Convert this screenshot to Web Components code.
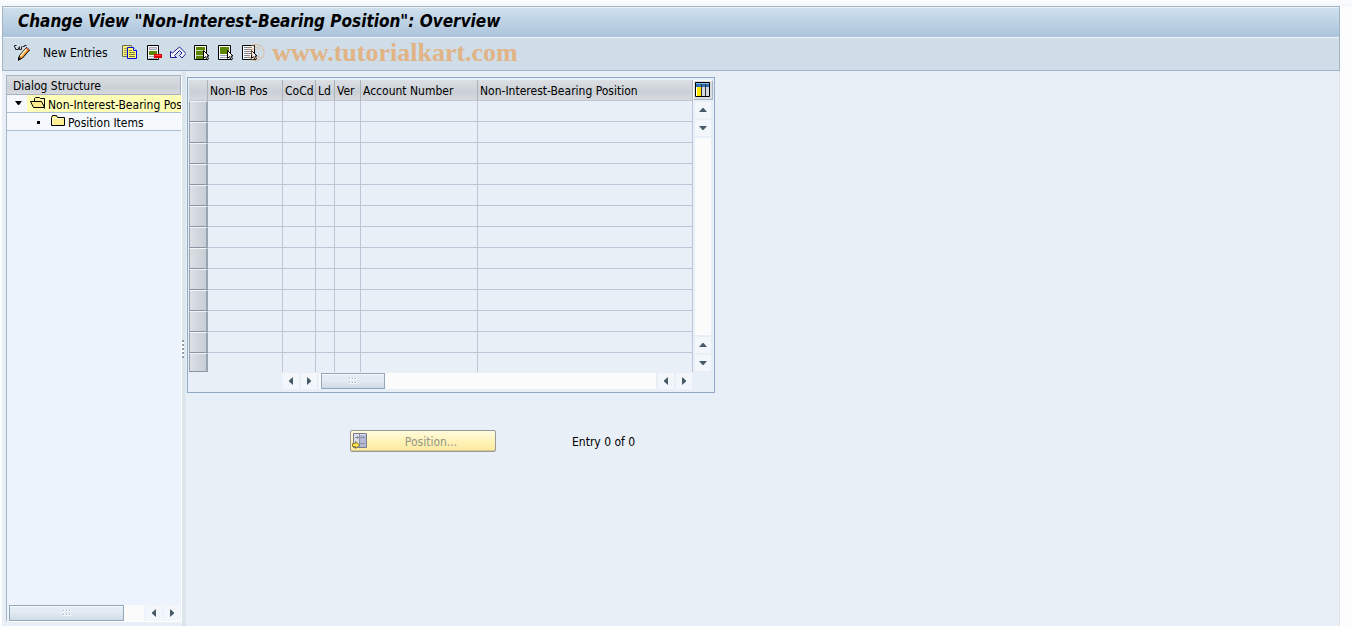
<!DOCTYPE html>
<html lang="en">
<head>
<meta charset="utf-8">
<title>Change View</title>
<style>
  :root {
    --text: #000;
    --line: #bcc6d6;
    --frame: #8eaac6;
    --surface: #e8eff6;
    --bar: #cfdde8;
    --head: linear-gradient(#dce0e5, #cbd0d6 60%, #d6dadf);
    --key: linear-gradient(#e6edf4, #e2eaf2 50%, #cfdbe6);
  }
  body {
    margin: 0;
    background: linear-gradient(#fcfdfe, #f4f7fa 6px, #fdfdfe 7px);
    color: var(--text);
    font: 12px/16px "DejaVu Sans Condensed", "DejaVu Sans", sans-serif;
  }
</style>
</head>
<body>
<view-window></view-window>

<script>
const ICONS = {
  edit: `
    <path fill="none" stroke="#222" d="M.5 2.500v-2h2m-1 2v2h3v-2m1-1v3h2v-3m1 0h2v-1h2"/>
    <path fill="#f59a2d" stroke="#000" d="M5.500 10.500l7-8 3 2.500-7 8-4 2z"/>
    <path fill="#fff3c4" d="M6 10.500l6-7 1.200 1-6 7z"/>
    <path fill="#d96552" d="M12 3.500l1-1 2 2-1 1z"/>
    <path fill="#000" d="M4 12l3 2-3 2z"/>`,
  copy: `
    <path fill="#f5f078" stroke="#6a6a55" d="M.500.500h9v11h-9z"/>
    <path stroke="#a2a05c" d="M2 3.500h4M2 5.500h4M2 7.500h4M2 9.500h4"/>
    <path fill="#ffff70" stroke="#0000e0" d="M5.500 2.500h6l3 3v8h-9z"/>
    <path fill="#fff" stroke="#0000e0" d="M11.500 2.500v3h3"/>
    <path stroke="#77773a" d="M7 5.500h3M7 7.500h6M7 9.500h6M7 11.500h6"/>`,
  remove: `
    <path fill="#fff" stroke="#000" d="M1.500.500h11v14h-11z"/>
    <path fill="#dedede" stroke="#a5a5b8" d="M3.500 2.500h7v2h-7z"/>
    <path fill="#5c8700" d="M3 6h8v4H3z"/>
    <path stroke="#a5a5b8" d="M3 11.500h5M3 13.500h8"/>
    <path fill="#e60000" d="M8 9h8v4H8z"/><path fill="#ff3b30" d="M9 10h6v1H9z"/>`,
  undo: `
    <path fill="#f7f8ff" stroke="#1c1c96" d="M.500 6.500v6h6l-2-2 5-5 2.500 2.500-2.500 2.500 2.500 2.500 4-4.500-6.500-6.500-7 6z"/>`,
  all: `
    <path fill="#fff" stroke="#000" d="M.500.500h12v14H.500z"/>
    <path fill="#5c8700" d="M2 2h9v3H2zM2 6h9v4H2zM2 11h8v3H2z"/>
    <path stroke="#cbd7ae" d="M2 5.500h9M2 10.500h8"/>
    <path fill="#fff" stroke="#000" d="M9.500 5.500v8l2-2 1.500 3.500 1.500-1-1.500-3h2z"/>`,
  block: `
    <path fill="#fff" stroke="#000" d="M.500.500h12v14H.500z"/>
    <path fill="#5c8700" d="M2 2h9v7H2z"/>
    <path stroke="#9aa0b8" d="M2 10.500h7M2 12.500h7"/>
    <path fill="#fff" stroke="#000" d="M9.500 5.500v8l2-2 1.500 3.500 1.500-1-1.500-3h2z"/>`,
  none: `
    <path fill="#fff" stroke="#000" d="M.500.500h12v14H.500z"/>
    <path stroke="#7b8296" d="M2 2.500h8M2 4.500h8M2 6.500h7M2 8.500h7M2 10.500h6M2 12.500h7"/>
    <path fill="#fff" stroke="#000" d="M9.500 5.500v8l2-2 1.500 3.500 1.500-1-1.500-3h2z"/>`,
  open: `
    <path fill="#fdf3a0" stroke="#000" d="M4.500 5.500v-3l1-1h4l1 1h4v10"/>
    <path fill="#fbeb8c" stroke="#000" d="M.500 5.500h11l3 6h-11z"/>`,
  folder: `
    <path fill="#fdee92" stroke="#000" d="M1.500 11.500v-8l1-2h4l1 2h7v8z"/>
    <path fill="none" stroke="#fffbd8" d="M2.500 10v-5.500h11"/>`,
  columns: `
    <path fill="#fff" stroke="#000" d="M.500.500h14v14H.500z"/>
    <path fill="#2c72b6" d="M1 1h13v4H1z"/><path fill="#86b8e2" d="M1 1h13v1H1z"/>
    <path fill="#ffe600" d="M2 5h4v9H2z"/>
    <path fill="#d5dade" d="M7 5h3v9H7zM11 5h3v9h-3z"/>
    <path stroke="#333" d="M6.500 2v12M10.500 2v12"/>`,
  position: `
    <path fill="#dcdfe9" stroke="#777c8c" d="M1.500.500h13v14h-13z"/>
    <path fill="#b5b8d2" d="M8 2h6v12H8z"/>
    <path stroke="#8b90a4" d="M3 4.500h4M5.500 3v3M8 4.500h5M8 10.500h5M7.500 1v13"/>
    <path fill="#ffe94d" stroke="#8a7a2c" d="M.500 10.500h3v-2l4 3.500-4 3.500v-2h-3z"/>`,
  left: `<path fill="#465a69" d="M10 4v8L6 8.500v-1z"/>`,
  right: `<path fill="#465a69" d="M6 4v8l4-3.500v-1z"/>`,
  up: `<path fill="#465a69" d="M4 10h8L8.500 6h-1z"/>`,
  down: `<path fill="#465a69" d="M4 6h8l-3.500 4h-1z"/>`
};

class UiIcon extends HTMLElement {
  constructor() {
    super();
    this.attachShadow({ mode: 'open' });
  }

  connectedCallback() {
    this.shadowRoot.innerHTML = `
      <style>
        :host { display: block; flex: none; width: 16px; height: 16px; }
        svg { display: block; }
      </style>
      <svg width="16" height="16" viewBox="0 0 16 16" aria-hidden="true">${ICONS[this.getAttribute('name')]}</svg>
    `;
  }
}

class ToolButton extends HTMLElement {
  constructor() {
    super();
    this.attachShadow({ mode: 'open' });
  }

  connectedCallback() {
    const icon = this.getAttribute('icon');
    const label = this.getAttribute('label');
    this.shadowRoot.innerHTML = `
      <style>
        :host { display: block; flex: none; }
        button {
          display: block;
          padding: 0;
          border: 0;
          background: none;
          color: inherit;
          font: inherit;
          cursor: pointer;
        }
      </style>
      <button type="button" ${label ? `aria-label="${label}"` : ''}>${icon ? `<ui-icon name="${icon}"></ui-icon>` : ''}<slot></slot></button>
    `;
  }
}

class TitleBar extends HTMLElement {
  constructor() {
    super();
    this.attachShadow({ mode: 'open' });
    this.shadowRoot.innerHTML = `
      <style>
        :host {
          display: block;
          padding: 2px 15px 5px;
          border-top: 1px solid #eaf2f8;
          border-bottom: 1px solid #edf3f8;
          background: linear-gradient(#cfe0ec, #abc3dc);
        }
        h1 {
          margin: 0;
          font: bold 17px/22px "DejaVu Sans Condensed", "DejaVu Sans", sans-serif;
          font-style: oblique 14deg;
          white-space: nowrap;
        }
      </style>
      <h1><slot></slot></h1>
    `;
  }
}

class ToolBar extends HTMLElement {
  constructor() {
    super();
    this.attachShadow({ mode: 'open' });
    this.shadowRoot.innerHTML = `
      <style>
        :host {
          display: flex;
          align-items: center;
          gap: 8px;
          position: relative;
          box-sizing: border-box;
          height: 32px;
          padding: 0 0 2px 11px;
          background: var(--bar);
        }
        .new { padding: 0 6px 0 5px; }
        .mark {
          position: absolute;
          left: 243px;
          top: 0;
          color: #e8a564;
          opacity: .75;
          font: bold 26px/30px "Liberation Serif", serif;
          white-space: nowrap;
          pointer-events: none;
        }
        .mark span { font-weight: normal; opacity: .7; }
      </style>
      <tool-button icon="edit" label="Display/Change"></tool-button>
      <tool-button class="new">New Entries</tool-button>
      <tool-button icon="copy" label="Copy As"></tool-button>
      <tool-button icon="remove" label="Delete"></tool-button>
      <tool-button icon="undo" label="Undo Change"></tool-button>
      <tool-button icon="all" label="Select All"></tool-button>
      <tool-button icon="block" label="Select Block"></tool-button>
      <tool-button icon="none" label="Deselect All"></tool-button>
      <div class="mark"><span>©</span> www.tutorialkart.com</div>
    `;
  }
}

// layout="double" repeats the pair of arrows at the start of the track
class ScrollBar extends HTMLElement {
  constructor() {
    super();
    this.attachShadow({ mode: 'open' });
  }

  connectedCallback() {
    const vertical = this.hasAttribute('vertical');
    const double = this.getAttribute('layout') === 'double';
    const names = vertical ? ['up', 'down'] : ['left', 'right'];
    const arrows = names.map(n => `<tool-button class="arrow" icon="${n}" label="Scroll ${n}"></tool-button>`).join('');
    const grip = '<i></i>'.repeat(6);
    this.shadowRoot.innerHTML = `
      <style>
        :host {
          display: flex;
          flex-direction: ${vertical ? 'column' : 'row'};
          gap: 2px;
        }
        .arrow { background: #f3f6fb; }
        .track {
          display: flex;
          flex: 1;
          min-width: 0;
          padding-left: var(--lead, 0);
          background: #fbfbfc;
        }
        .thumb {
          display: grid;
          grid-template-columns: repeat(3, 2px);
          gap: 2px 1px;
          place-content: center;
          box-sizing: border-box;
          width: var(--thumb, 64px);
          height: 16px;
          border: 1px solid #93a7ba;
          background: var(--key);
          box-shadow: inset 0 1px #f7fafc;
        }
        i { width: 2px; height: 2px; background: linear-gradient(135deg, #9eb0c0 50%, #fff 50%); }
      </style>
      ${double ? arrows : ''}
      <div class="track">${vertical ? '' : `<div class="thumb">${grip}</div>`}</div>
      ${arrows}
    `;
  }
}

class DialogTree extends HTMLElement {
  constructor() {
    super();
    this.attachShadow({ mode: 'open' });
    this.shadowRoot.innerHTML = `
      <style>
        :host {
          display: flex;
          flex-direction: column;
          box-sizing: border-box;
          width: 176px;
          border: 1px solid #fff;
          border-left-color: #a5b6c6;
          border-top-color: #a5b6c6;
          background: #ecf3fc;
        }
        h2 {
          margin: 0;
          padding: 2px 6px 0;
          border-bottom: 1px solid #a8b2bf;
          border-right: 1px solid #a8b2bf;
          background: var(--head);
          font: inherit;
        }
        ul { flex: 1; margin: 0; padding: 0; list-style: none; }
        li {
          display: flex;
          overflow: hidden;
          height: 17px;
          border-bottom: 1px solid #a9c0d2;
          background: #f5f9fe;
          white-space: nowrap;
        }
        .twist {
          box-sizing: border-box;
          flex: none;
          width: 20px;
          padding: 6px 0 0 8px;
        }
        .twist svg { display: block; }
        .node { display: flex; flex: 1; gap: 2px; padding: 1px 0 0 3px; }
        .node span { padding-top: 1px; }
        .selected { background: #ffffb8; }
        .child .twist { width: 40px; padding: 8px 0 0 30px; }
        scroll-bar { --thumb: 115px; padding: 0 1px 0 2px; }
      </style>
      <h2>Dialog Structure</h2>
      <ul role="tree">
        <li role="treeitem" aria-expanded="true" aria-selected="true">
          <div class="twist"><svg width="8" height="6" aria-hidden="true"><path d="M0 0h7L4 4H3z"/></svg></div>
          <div class="node selected"><ui-icon name="open"></ui-icon><span>Non-Interest-Bearing Position</span></div>
        </li>
        <li class="child" role="treeitem">
          <div class="twist"><svg width="3" height="3" aria-hidden="true"><path d="M0 0h3v3H0z"/></svg></div>
          <div class="node"><ui-icon name="folder"></ui-icon><span>Position Items</span></div>
        </li>
      </ul>
      <scroll-bar></scroll-bar>
    `;
  }
}

class EntryTable extends HTMLElement {
  constructor() {
    super();
    this.columns = [
      { name: 'Non-IB Pos', width: 75 },
      { name: 'CoCd', width: 33 },
      { name: 'Ld', width: 19 },
      { name: 'Ver', width: 26 },
      { name: 'Account Number', width: 117 },
      { name: 'Non-Interest-Bearing Position', width: 215 }
    ];
    this.rows = 13;
    this.attachShadow({ mode: 'open' });
    this.render();
  }

  render() {
    const cols = this.columns.map(c => `<col style="width: ${c.width}px">`).join('');
    const heads = this.columns.map(c => `<th scope="col">${c.name}</th>`).join('');
    const row = `<tr><td class="pick"></td>${'<td></td>'.repeat(this.columns.length)}</tr>`;
    this.shadowRoot.innerHTML = `
      <style>
        :host {
          display: inline-grid;
          grid-template-columns: auto 20px;
          row-gap: 1px;
          padding: 2px 1px 3px 1px;
          border: 1px solid var(--frame);
        }
        table {
          width: 504px;
          border-spacing: 0;
          table-layout: fixed;
        }
        .sel { width: 19px; }
        th, td {
          box-sizing: border-box;
          padding: 0;
          border-right: 1px solid var(--line);
          border-bottom: 1px solid var(--line);
        }
        th {
          height: 21px;
          padding: 2px 0 0 2px;
          border-right-color: #a9b1bb;
          background: var(--head);
          font-weight: normal;
          text-align: left;
          white-space: nowrap;
        }
        td { height: 21px; }
        tr:last-child td { height: 19px; border-bottom: 0; }
        .pick, tr:last-child .pick {
          border: 1px solid #9aa4b1;
          border-top-color: #f2f5f8;
          border-right-width: 2px;
          border-bottom: 1px solid #8995a3;
          background: linear-gradient(90deg, #dbe0e5, #c8ced5);
        }
        .side {
          display: flex;
          flex-direction: column;
          align-items: center;
          padding-bottom: 1px;
        }
        .config {
          padding: 1px;
          border: 1px solid #aab4bf;
          border-top-color: #fff;
          border-left-color: #fff;
          background: #d8dde2;
        }
        .side scroll-bar { flex: 1; padding-top: 2px; }
        .across { --lead: 2px; padding: 0 1px 0 94px; }
      </style>
      <table>
        <colgroup><col class="sel">${cols}</colgroup>
        <thead><tr><th aria-label="Select"></th>${heads}</tr></thead>
        <tbody>${row.repeat(this.rows)}</tbody>
      </table>
      <div class="side">
        <tool-button class="config" icon="columns" label="Table Settings"></tool-button>
        <scroll-bar vertical layout="double"></scroll-bar>
      </div>
      <scroll-bar class="across" layout="double"></scroll-bar>
    `;
  }
}

class PositionBar extends HTMLElement {
  constructor() {
    super();
    this.attachShadow({ mode: 'open' });
    this.shadowRoot.innerHTML = `
      <style>
        :host { display: flex; align-items: center; gap: 76px; }
        button {
          display: flex;
          align-items: center;
          box-sizing: border-box;
          width: 146px;
          height: 22px;
          padding: 0 1px;
          border: 1px solid #989898;
          border-radius: 2px;
          background: linear-gradient(#fffbe0, #fff3b8 50%, #fbe9a0);
          box-shadow: inset 0 -1px #d9c98a;
          color: #949488;
          font: inherit;
        }
        button span { flex: 1; text-align: center; }
        span, div { padding-top: 2px; }
      </style>
      <button type="button" disabled><ui-icon name="position"></ui-icon><span>Position...</span></button>
      <div>Entry 0 of 0</div>
    `;
  }
}

class ViewWindow extends HTMLElement {
  constructor() {
    super();
    this.attachShadow({ mode: 'open' });
    this.shadowRoot.innerHTML = `
      <style>
        :host {
          display: flex;
          flex-direction: column;
          box-sizing: border-box;
          min-height: 100vh;
          padding: 6px 12px 0 2px;
        }
        header { border: 1px solid #a0b4c8; }
        main {
          display: flex;
          flex: 1;
          padding-left: 4px;
          border-right: 1px solid #dce4ec;
          background: var(--surface);
        }
        dialog-tree { flex: none; margin: 4px 0; }
        .split {
          display: flex;
          align-items: center;
          width: 4px;
          background: #dce6ed;
        }
        .split::before {
          content: "";
          width: 2px;
          height: 18px;
          background: repeating-linear-gradient(#8d9cab 0 2px, #fff 2px 4px);
        }
        .content { flex: 1; padding: 6px 0 0 1px; }
        entry-table { vertical-align: top; }
        position-bar { margin: 37px 0 0 163px; }
      </style>
      <header>
        <title-bar>Change View "Non-Interest-Bearing Position": Overview</title-bar>
        <tool-bar></tool-bar>
      </header>
      <main>
        <dialog-tree></dialog-tree>
        <div class="split"></div>
        <div class="content">
          <entry-table></entry-table>
          <position-bar></position-bar>
        </div>
      </main>
    `;
  }
}

customElements.define('ui-icon', UiIcon);
customElements.define('tool-button', ToolButton);
customElements.define('title-bar', TitleBar);
customElements.define('tool-bar', ToolBar);
customElements.define('scroll-bar', ScrollBar);
customElements.define('dialog-tree', DialogTree);
customElements.define('entry-table', EntryTable);
customElements.define('position-bar', PositionBar);
customElements.define('view-window', ViewWindow);
</script>
</body>
</html>
